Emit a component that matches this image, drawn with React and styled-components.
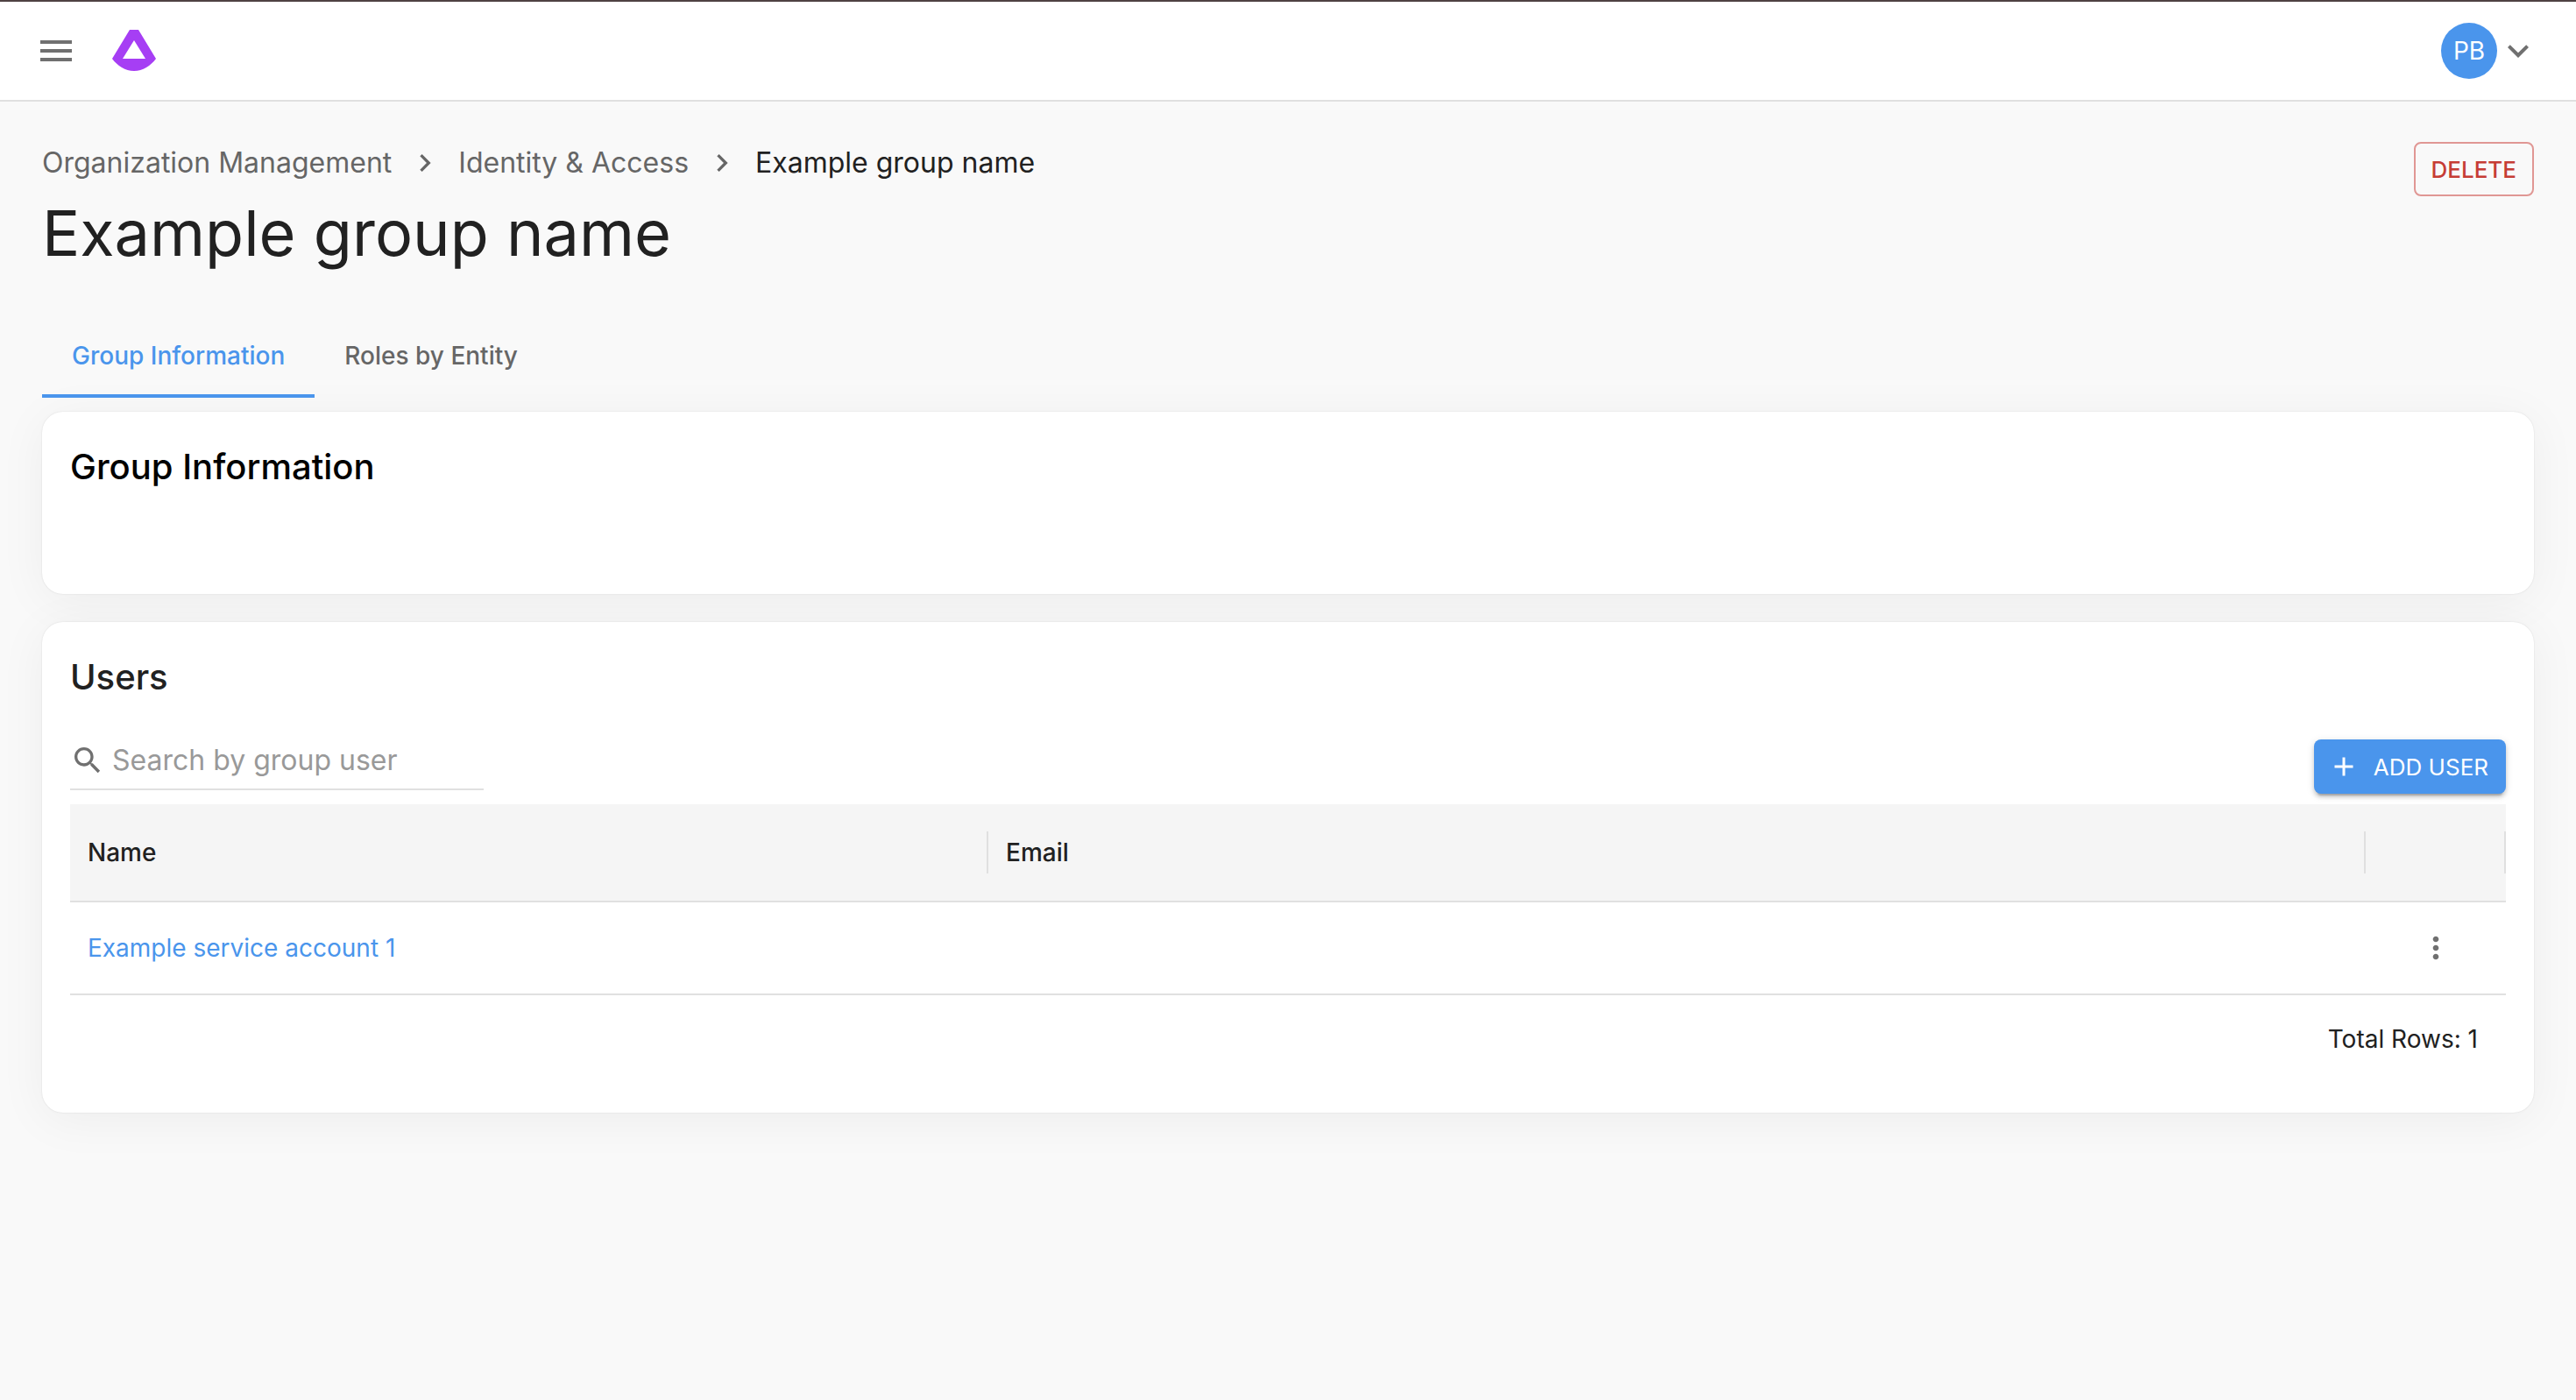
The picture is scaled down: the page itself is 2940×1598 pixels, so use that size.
import styled, { createGlobalStyle } from "styled-components";

const users = [
    { id: 1, name: "Example service account 1", email: "" },
];

function Icon({ size, d }){
    return (
        <IconStyle $size={size} viewBox="0 0 24 24" aria-hidden="true">
            <path d={d}/>
        </IconStyle>
    )
}

function GroupPage(){
    return (
        <>
            <GlobalStyle/>
            <Header>
                <IconButton type="button" aria-label="Menu">
                    <Icon size={48} d="M3 18h18v-2H3v2zm0-5h18v-2H3v2zm0-7v2h18V6H3z"/>
                </IconButton>
                <LogoLink href="#" aria-label="Home">
                    <Logo viewBox="0 0 50 48" aria-hidden="true">
                        <path fillRule="evenodd" d="M20 0H30L50 33C44 41 35 47 25 47S6 41 0 33ZM25 12L12 33H38Z"/>
                    </Logo>
                </LogoLink>
                <Account type="button" aria-label="Account">
                    <Avatar>PB</Avatar>
                    <Icon size={48} d="M16.59 8.59 12 13.17 7.41 8.59 6 10l6 6 6-6z"/>
                </Account>
            </Header>
            <Main>
                <Top>
                    <div>
                        <Breadcrumbs aria-label="Breadcrumb">
                            <a href="#">Organization Management</a>
                            <Icon size={40} d="M10 6 8.59 7.41 13.17 12l-4.58 4.59L10 18l6-6z"/>
                            <a href="#">Identity &amp; Access</a>
                            <Icon size={40} d="M10 6 8.59 7.41 13.17 12l-4.58 4.59L10 18l6-6z"/>
                            <span>Example group name</span>
                        </Breadcrumbs>
                        <h1>Example group name</h1>
                    </div>
                    <DeleteButton type="button">DELETE</DeleteButton>
                </Top>
                <Tabs role="tablist">
                    <Tab type="button" role="tab" aria-selected="true" $active>Group Information</Tab>
                    <Tab type="button" role="tab" aria-selected="false">Roles by Entity</Tab>
                </Tabs>
                <InfoCard>
                    <CardTitle $color="#000000">Group Information</CardTitle>
                </InfoCard>
                <Card>
                    <CardTitle $color="#212121">Users</CardTitle>
                    <Toolbar>
                        <Search>
                            <Icon size={40} d="M15.5 14h-.79l-.28-.27C15.41 12.59 16 11.11 16 9.5 16 5.91 13.09 3 9.5 3S3 5.91 3 9.5 5.91 16 9.5 16c1.61 0 3.09-.59 4.23-1.57l.27.28v.79l5 4.99L20.49 19l-4.99-5zm-6 0C7.01 14 5 11.99 5 9.5S7.01 5 9.5 5 14 7.01 14 9.5 11.99 14 9.5 14z"/>
                            <input type="text" aria-label="Search by group user" placeholder="Search by group user"/>
                        </Search>
                        <AddButton type="button">
                            <Icon size={36} d="M19 13h-6v6h-2v-6H5v-2h6V5h2v6h6v2z"/>
                            ADD USER
                        </AddButton>
                    </Toolbar>
                    <Table>
                        <colgroup>
                            <NameCol/>
                            <col/>
                            <ActionCol/>
                        </colgroup>
                        <thead>
                            <tr>
                                <th scope="col"><HeadCell>Name</HeadCell></th>
                                <th scope="col"><HeadCell>Email</HeadCell></th>
                                <th scope="col" aria-label="Actions"><HeadCell/></th>
                            </tr>
                        </thead>
                        <tbody>
                            {users.map((user) => (
                                <tr key={user.id}>
                                    <td><a href="#">{user.name}</a></td>
                                    <td>{user.email}</td>
                                    <td>
                                        <RowMenu type="button" aria-label="Row actions">
                                            <Icon size={40} d="M12 8c1.1 0 2-.9 2-2s-.9-2-2-2-2 .9-2 2 .9 2 2 2zm0 2c-1.1 0-2 .9-2 2s.9 2 2 2 2-.9 2-2-.9-2-2-2zm0 6c-1.1 0-2 .9-2 2s.9 2 2 2 2-.9 2-2-.9-2-2-2z"/>
                                        </RowMenu>
                                    </td>
                                </tr>
                            ))}
                        </tbody>
                    </Table>
                    <TableFooter>Total Rows: {users.length}</TableFooter>
                </Card>
            </Main>
        </>
    )
}

export default GroupPage;

const GlobalStyle = createGlobalStyle`
    *{
        box-sizing:border-box;
    }
    body{
        margin:0;
        background-color:#F9F9F9;
        color:#212121;
        font-family:"Inter", "Liberation Sans", sans-serif;
        font-optical-sizing:none;
        font-size:28px;
        line-height:40px;
    }
    button, input{
        font-family:inherit;
        padding:0;
        border:none;
        background:none;
    }
    button{
        cursor:pointer;
    }
    a{
        text-decoration:none;
    }
`
const IconStyle = styled.svg`
    width:${({ $size }) => $size}px;
    height:${({ $size }) => $size}px;
    flex-shrink:0;
    fill:currentColor;
`
const Header = styled.header`
    height:116px;
    padding:0 42px 0 40px;
    display:flex;
    align-items:center;
    background-color:#FFFFFF;
    border-top:2px solid #4F4243;
    border-bottom:2px solid #E0E0E0;
`
const IconButton = styled.button`
    display:flex;
    color:#707070;
`
const LogoLink = styled.a`
    display:flex;
    margin-left:40px;
`
const Logo = styled.svg`
    width:50px;
    height:48px;
    fill:#A63EF4;
`
const Account = styled.button`
    display:flex;
    align-items:center;
    margin-left:auto;
    color:#707070;
`
const Avatar = styled.span`
    width:64px;
    height:64px;
    display:flex;
    align-items:center;
    justify-content:center;
    border-radius:50%;
    background-color:#4A95EC;
    color:#FFFFFF;
    font-size:28px;
`
const Main = styled.main`
    padding:46px 48px;
`
const Top = styled.div`
    display:flex;
    align-items:flex-start;
    justify-content:space-between;
    h1{
        margin:16px 0 52px;
        font-size:72px;
        line-height:80px;
        font-weight:400;
    }
`
const Breadcrumbs = styled.nav`
    display:flex;
    align-items:center;
    gap:18px;
    font-size:32px;
    line-height:48px;
    color:#666666;
    a{
        color:#666666;
    }
    span{
        color:#212121;
    }
`
const DeleteButton = styled.button`
    height:62px;
    padding:0 18px;
    border:2px solid #E09794;
    border-radius:8px;
    font-size:26px;
    font-weight:500;
    color:#C63D35;
`
const Tabs = styled.div`
    display:flex;
    margin-bottom:16px;
`
const Tab = styled.button`
    height:96px;
    padding:0 34px;
    border-top:4px solid transparent;
    border-bottom:4px solid ${({ $active }) => $active ? "#4A95EC" : "transparent"};
    font-size:28px;
    font-weight:500;
    color:${({ $active }) => $active ? "#4A95EC" : "#666666"};
`
const Card = styled.section`
    padding:32px;
    border-radius:24px;
    background-color:#FFFFFF;
    box-shadow:0 0 2px rgba(0, 0, 0, 0.12), 0 8px 56px rgba(0, 0, 0, 0.05);
`
const InfoCard = styled(Card)`
    min-height:208px;
    margin-bottom:32px;
`
const CardTitle = styled.h2`
    margin:0;
    font-size:40px;
    line-height:62px;
    font-weight:500;
    color:${({ $color }) => $color};
`
const Toolbar = styled.div`
    display:flex;
    align-items:flex-end;
    justify-content:space-between;
    margin:32px 0 12px;
`
const Search = styled.label`
    width:472px;
    height:66px;
    margin-bottom:4px;
    display:flex;
    align-items:center;
    gap:8px;
    border-bottom:2px solid #E0E0E0;
    color:#707070;
    input{
        flex:1;
        min-width:0;
        font-size:32px;
        line-height:40px;
        color:#212121;
    }
    input::placeholder{
        color:#999999;
        opacity:1;
    }
`
const AddButton = styled.button`
    height:62px;
    padding:0 20px 0 16px;
    display:flex;
    align-items:center;
    gap:16px;
    border-radius:8px;
    background-color:#4A95EC;
    box-shadow:0 6px 2px -4px rgba(0, 0, 0, 0.2), 0 4px 4px rgba(0, 0, 0, 0.14), 0 2px 10px rgba(0, 0, 0, 0.12);
    font-size:26px;
    color:#FFFFFF;
`
const Table = styled.table`
    width:100%;
    table-layout:fixed;
    border-collapse:separate;
    border-spacing:0;
    th{
        height:112px;
        padding:0;
        background-color:#F5F5F5;
        border-bottom:2px solid #E0E0E0;
        font-weight:500;
        text-align:left;
    }
    td{
        height:106px;
        padding:0 20px;
        border-bottom:2px solid #E0E0E0;
    }
    td a{
        color:#4A95EC;
    }
`
const NameCol = styled.col`
    width:1048px;
`
const ActionCol = styled.col`
    width:160px;
`
const HeadCell = styled.div`
    height:48px;
    padding-left:20px;
    line-height:48px;
    border-right:2px solid #E0E0E0;
`
const RowMenu = styled.button`
    display:flex;
    margin:0 auto;
    color:#707070;
`
const TableFooter = styled.p`
    margin:0;
    padding:30px 32px 32px;
    text-align:right;
`
